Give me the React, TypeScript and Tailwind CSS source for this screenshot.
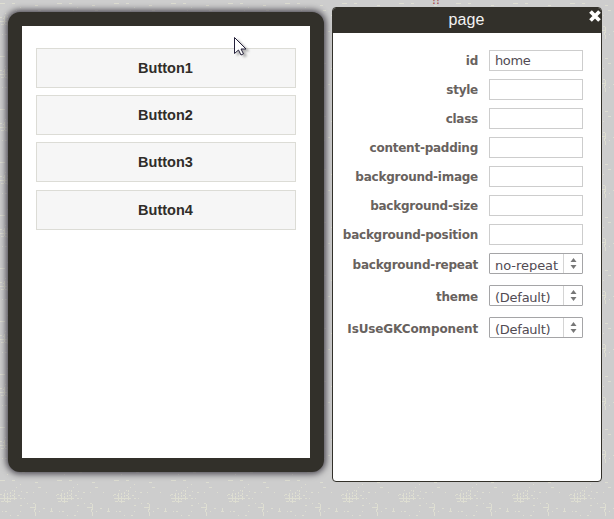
import React from "react";

const buttons = ["Button1", "Button2", "Button3", "Button4"];
const fields = [
  ["id", "home"],
  ["style", ""],
  ["class", ""],
  ["content-padding", ""],
  ["background-image", ""],
  ["background-size", ""],
  ["background-position", ""],
];
const selects = [
  { name: "background-repeat", value: "no-repeat", labelClass: "tracking-[-0.26px]", valueClass: "tracking-[-0.05px]" },
  { name: "theme", value: "(Default)", labelClass: "tracking-[-0.2px]", valueClass: "tracking-[-0.25px]" },
  { name: "IsUseGKComponent", value: "(Default)", labelClass: "tracking-[-0.12px]", valueClass: "tracking-[-0.25px]" },
];

function Weave() {
  return (
    <svg className="absolute inset-0 h-full w-full" shapeRendering="crispEdges">
      <defs>
        <pattern id="weave" width="57" height="53" patternUnits="userSpaceOnUse" y="477">
          <path
            stroke="#deded2"
            strokeWidth="1"
            fill="none"
            d="M0 3.5h5M12 3.5h3M35 5.5h3M20 7.5h1M38 10.5h3M16 10.5h1M5 13.5h1M12 13.5h1M21 14.5h1M26 15.5h2M33 15.5h1M46 15.5h1M0 17.5h2M3 18.5h2M12 18.5h2M18 18.5h2M56 18.5h1M0 21.5h17M20 21.5h2M24 21.5h1M1 24.5h3M5 24.5h5M27 26.5h1M33 26.5h2M20 28.5h2M30 30.5h5M43 31.5h2M2 34.5h1M5 34.5h2M20 34.5h1M50 34.5h3M39 34.5h1M10 38.5h1M17 38.5h2M18 43.5h1M22 48.5h3M7 50.5h1"
          />
          <path stroke="#deded2" fill="none" strokeDasharray="2 1" d="M4.5 16v9M7.5 16v10M10.5 15v10M14.5 13v10" />
          <path stroke="#deded2" fill="none" d="M35.5 27v6M34.5 32v3M35.5 35v4M51.5 31v4" />
        </pattern>
      </defs>
      <rect width="100%" height="100%" fill="url(#weave)" />
    </svg>
  );
}

export default function App() {
  return (
    <main className="relative h-[519px] w-[614px] overflow-hidden bg-[#cdcdcd]">
      <Weave />
      <div className="absolute top-[-9px] left-[432px] font-['Liberation_Sans',sans-serif] text-[14px] leading-4 text-[#a85050]">!!</div>
      <div className="relative flex items-start pt-[7px] pl-2">
        <section className="mt-[5px] h-[460px] w-[316px] rounded-[12px] border-14 border-[#32302a] bg-white px-[14px] pt-[22px] shadow-[0_0_6px_2px_#4b4850]">
          <div className="flex flex-col gap-[7px]">
            {buttons.map((b) => (
              <button
                key={b}
                className="h-10 w-full border border-[#dcdcd6] bg-[#f6f6f6] pt-[2px] pr-px font-['Liberation_Sans',Arial,sans-serif] text-[14.5px] font-bold text-[#302d29] last:mt-px"
              >
                {b}
              </button>
            ))}
          </div>
        </section>
        <section className="ml-2 h-[475px] w-[270px] overflow-hidden rounded-[4px] border border-[#32302a] bg-white">
          <header className="relative h-[25px] bg-[#32302a] pr-px text-center font-['Liberation_Sans',Arial,sans-serif] text-[16px] leading-[24px] tracking-[0.1px] text-[#f2f2f2]">
            page
            <svg className="absolute top-[2px] right-0 h-[12px] w-[12px]" viewBox="0 0 12 12">
              <path d="M1.5 1.5 10.5 10.5M10.5 1.5 1.5 10.5" stroke="white" strokeWidth="3.8" />
            </svg>
          </header>
          <div className="flex flex-col gap-2 pt-[17px] font-['DejaVu_Sans',Verdana,sans-serif] text-[12px]">
            {fields.map(([name, value]) => (
              <label key={name} className="flex h-[21px] items-center">
                <span className="w-[145px] text-right font-bold tracking-[-0.25px] text-[#68625e]">{name}</span>
                <span className="ml-[11px] h-[21px] w-[94px] border border-[#cdcdcd] pl-[5px] text-[13px] leading-[20px] tracking-[-0.4px] text-[#514b53]">{value}</span>
              </label>
            ))}
          </div>
          <div className="mt-2 flex flex-col gap-[11px] font-['DejaVu_Sans',Verdana,sans-serif] text-[12px]">
            {selects.map(({ name, value, labelClass, valueClass }) => (
              <label key={name} className="flex h-[21px] items-center">
                <span className={`w-[145px] pt-[2px] text-right font-bold text-[#68625e] ${labelClass}`}>{name}</span>
                <span className="ml-[11px] flex h-[21px] w-[94px] overflow-hidden rounded-[1px] border border-[#a5a5a7]">
                  <span className={`h-[18px] w-[73px] overflow-hidden pl-[5px] text-[13px] leading-[23px] whitespace-nowrap text-[#514b53] ${valueClass}`}>{value}</span>
                  <span className="flex h-full w-[19px] items-center justify-center border-l border-[#d4d4d4]">
                    <svg width="7" height="11" viewBox="0 0 7 11" fill="#777">
                      <path d="M3.5 0 6.5 4H.5ZM.5 7h6l-3 4Z" />
                    </svg>
                  </span>
                </span>
              </label>
            ))}
          </div>
        </section>
      </div>
      <svg className="absolute top-[36px] left-[233px] drop-shadow-[3px_2px_1px_#77777788]" width="16" height="22" viewBox="0 0 16 22">
        <path d="M1.5 1.5v16l4-3.5 2.5 5 2.5-1.2L8 13h5Z" fill="white" stroke="#24203a" strokeWidth="1" />
      </svg>
    </main>
  );
}
